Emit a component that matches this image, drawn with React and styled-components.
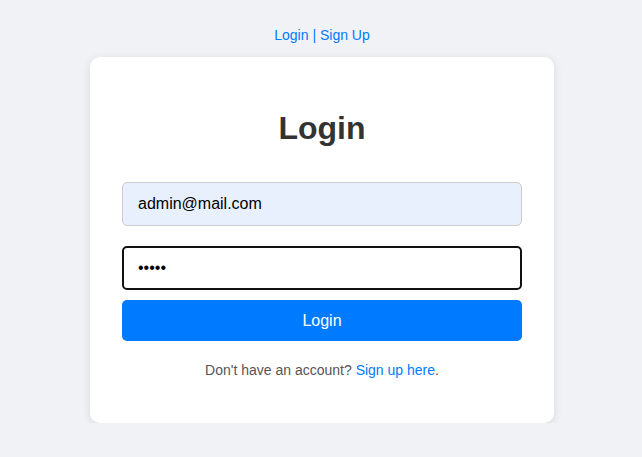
import React from "react";
import styled, { createGlobalStyle } from "styled-components";

const GlobalStyle = createGlobalStyle`
  body {
    margin: 0;
    background: #f0f2f5;
    font-family: "Liberation Sans", Arial, sans-serif;
  }
`;

const Page = styled.div`
  display: flex;
  flex-direction: column;
  align-items: center;
  padding: 26px 0 0 2px;
`;

const Nav = styled.nav`
  font-size: 14px;
  line-height: 18px;
  color: #007bff;
  margin-bottom: 13px;
`;

const NavLink = styled.a`
  color: #007bff;
  text-decoration: none;
`;

const Card = styled.div`
  width: 400px;
  padding: 32px;
  background: #fff;
  border-radius: 10px;
  box-shadow: 0 2px 10px rgba(0, 0, 0, 0.1);
  display: flex;
  flex-direction: column;
`;

const Title = styled.h2`
  margin: 21px 0 35px;
  font-size: 32px;
  line-height: 37px;
  font-weight: bold;
  color: #333;
  text-align: center;
`;

const Input = styled.input`
  box-sizing: border-box;
  width: 100%;
  height: 44px;
  padding: 0 15px;
  font-family: inherit;
  font-size: 16px;
  color: #000;
  border-radius: 5px;
  outline: none;
  margin-bottom: ${(p) => p.$gap}px;
  background: ${(p) => (p.$filled ? "#e8f0fe" : "#fff")};
  border: ${(p) => (p.$active ? "2px solid #111" : "1px solid #ccc")};
  padding-left: ${(p) => (p.$active ? 14 : 15)}px;
`;

const Button = styled.button`
  height: 41px;
  border: none;
  border-radius: 5px;
  background: #007bff;
  color: #fff;
  font-family: inherit;
  font-size: 16px;
  cursor: pointer;
`;

const Footer = styled.p`
  margin: 21px 0 13px;
  font-size: 14px;
  line-height: 16px;
  color: #555;
  text-align: center;
`;

const App = () => {
  return (
    <>
      <GlobalStyle />
      <Page>
        <Nav>
          <NavLink href="#">Login</NavLink> | <NavLink href="#">Sign Up</NavLink>
        </Nav>
        <Card>
          <Title>Login</Title>
          <Input type="email" defaultValue="admin@mail.com" $filled $gap={20} />
          <Input type="password" defaultValue="admin" $active $gap={10} autoFocus />
          <Button>Login</Button>
          <Footer>
            Don't have an account? <NavLink href="#">Sign up here</NavLink>.
          </Footer>
        </Card>
      </Page>
    </>
  );
};

export default App;
